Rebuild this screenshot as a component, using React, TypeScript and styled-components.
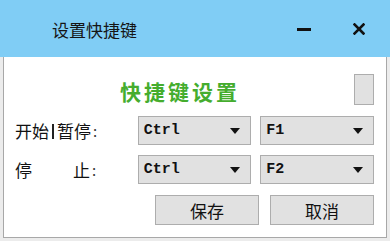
import React from 'react';
import styled, { createGlobalStyle } from 'styled-components';

const GlobalStyle = createGlobalStyle`
  html, body {
    margin: 0;
    padding: 0;
    background: #ececec;
  }
  body {
    font-family: "Noto Sans CJK SC", "Noto Sans", sans-serif;
  }
`;

type Combo = { value: string };

function ComboBox({ value }: Combo) {
  return (
    <Select>
      <SelectText>{value}</SelectText>
      <Arrow viewBox="0 0 10 6">
        <path d="M0 0 L10 0 L5 6 Z" fill="#111" />
      </Arrow>
    </Select>
  );
}

export default function App() {
  return (
    <>
      <GlobalStyle />
      <Frame>
        <TitleBar>
          <Title>设置快捷键</Title>
          <TitleButtons>
            <Minimize />
            <CloseIcon viewBox="0 0 12 12">
              <path d="M1.5 1.5 L10.5 10.5 M10.5 1.5 L1.5 10.5" stroke="#111" strokeWidth="2.6" strokeLinecap="square" />
            </CloseIcon>
          </TitleButtons>
        </TitleBar>
        <Body>
          <Header>
            <Heading>快捷键设置</Heading>
            <SmallBox />
          </Header>
          <Row>
            <Label>
              <span>开始</span>
              <Bar />
              <span>暂停</span>
              <Colon>:</Colon>
            </Label>
            <ComboBox value="Ctrl" />
            <ComboBox value="F1" />
          </Row>
          <Row>
            <Label>
              <span>停</span>
              <Spacer />
              <span>止</span>
              <Colon>:</Colon>
            </Label>
            <ComboBox value="Ctrl" />
            <ComboBox value="F2" />
          </Row>
          <Actions>
            <Button>保存</Button>
            <Button>取消</Button>
          </Actions>
        </Body>
      </Frame>
    </>
  );
}

const Frame = styled.div`
  width: 390px;
  height: 241px;
  display: flex;
  flex-direction: column;
  background: #ececec;
  overflow: hidden;
`;

const TitleBar = styled.div`
  height: 57px;
  flex-shrink: 0;
  background: #80cdf5;
  display: flex;
  align-items: center;
  padding-left: 52px;
  padding-right: 25px;
  box-sizing: border-box;
`;

const Title = styled.div`
  font-size: 17px;
  color: #151515;
  flex: 1;
  line-height: 1;
  margin-top: 2px;
`;

const TitleButtons = styled.div`
  display: flex;
  align-items: center;
  gap: 42px;
`;

const Minimize = styled.div`
  width: 14px;
  height: 3px;
  background: #111;
  margin-top: 2px;
`;

const CloseIcon = styled.svg`
  width: 12px;
  height: 12px;
  margin-top: 1px;
`;

const Body = styled.div`
  flex: 1;
  margin: 0 3px 3px 3px;
  background: #fff;
  border: 1px solid #a8a8a8;
  border-top: none;
  padding: 16px 12px 0 11px;
  display: flex;
  flex-direction: column;
  gap: 10px;
  box-sizing: border-box;
`;

const Header = styled.div`
  height: 32px;
  display: flex;
  align-items: center;
  justify-content: space-between;
  padding-left: 105px;
  margin-bottom: 1px;
`;

const Heading = styled.div`
  font-size: 21px;
  font-weight: 700;
  color: #45ad2e;
  letter-spacing: 3px;
  line-height: 1;
  margin-top: 4px;
`;

const SmallBox = styled.div`
  width: 18px;
  height: 29px;
  background: #e1e1e1;
  border: 1px solid #adadad;
`;

const Row = styled.div`
  height: 29px;
  display: flex;
  align-items: center;
  gap: 9px;
`;

const Label = styled.div`
  width: 114px;
  display: flex;
  align-items: center;
  font-size: 17px;
  color: #111;
  white-space: nowrap;
`;

const Bar = styled.span`
  width: 2px;
  height: 15px;
  background: #222;
  margin: 1px 3px 0 3px;
`;

const Spacer = styled.span`
  width: 41px;
`;

const Colon = styled.span`
  margin-left: 2px;
  font-size: 15px;
  color: #333;
`;

const Select = styled.div`
  width: 114px;
  height: 29px;
  box-sizing: border-box;
  background: #e1e1e1;
  border: 1px solid #adadad;
  display: flex;
  align-items: center;
  justify-content: space-between;
  padding: 0 10px 0 5px;
`;

const SelectText = styled.span`
  font-family: "Liberation Mono", "DejaVu Sans Mono", monospace;
  font-weight: 700;
  font-size: 15px;
  color: #111;
`;

const Arrow = styled.svg`
  width: 10px;
  height: 6px;
`;

const Actions = styled.div`
  display: flex;
  justify-content: flex-end;
  gap: 11px;
  margin-top: 1px;
`;

const Button = styled.div`
  width: 104px;
  height: 30px;
  box-sizing: border-box;
  background: #e1e1e1;
  border: 1px solid #adadad;
  display: flex;
  align-items: center;
  justify-content: center;
  font-size: 17px;
  color: #111;
`;
